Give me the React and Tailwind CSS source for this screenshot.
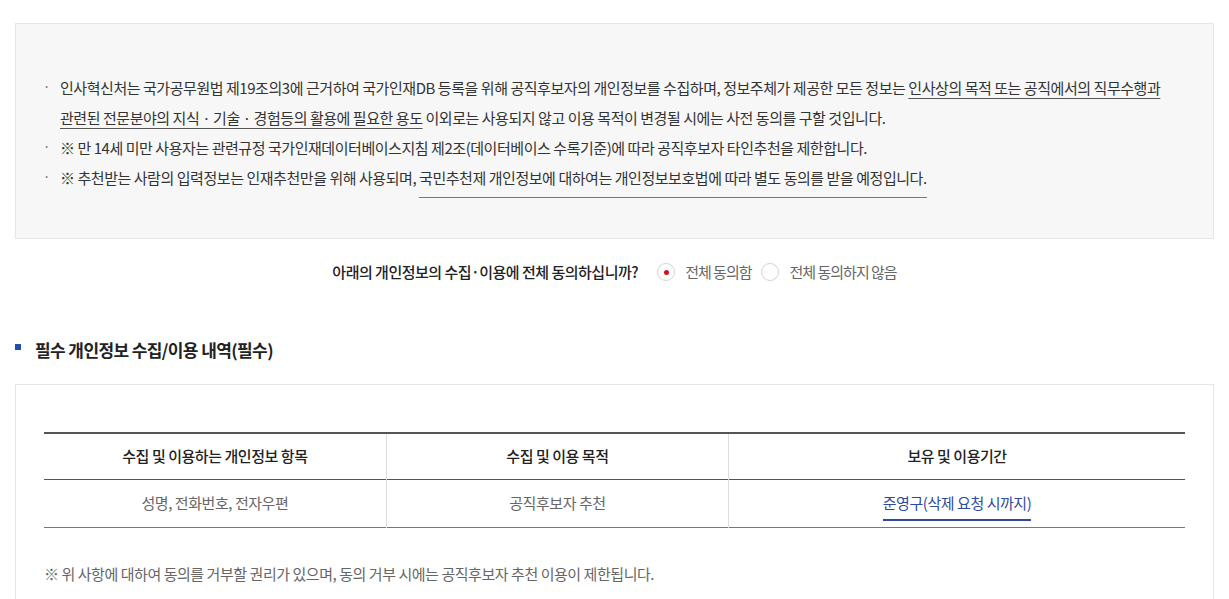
import React from 'react';

const font = { fontFamily: '"Noto Sans CJK KR", "Noto Sans", sans-serif' };

const Bullet = ({ children }) => (
  <li className="relative pl-[44px] before:absolute before:left-[27px] before:top-[-1px] before:content-['·'] before:text-[#555] before:text-[13px]">
    {children}
  </li>
);

const App = () => {
  return (
    <div className="bg-white min-h-screen px-[15px] pt-[23px] text-[#333]" style={font}>
      <div className="bg-[#f7f7f7] border border-[#e6e6e6] pt-[49px] pb-[40px] pr-[30px]">
        <ul className="text-[15px] leading-[30px] tracking-[-0.45px] break-keep">
          <Bullet>
            인사혁신처는 국가공무원법 제19조의3에 근거하여 국가인재DB 등록을 위해 공직후보자의 개인정보를 수집하며, 정보주체가 제공한 모든 정보는{' '}
            <span className="underline underline-offset-[4px] decoration-[#555]">
              인사상의 목적 또는 공직에서의 직무수행과 관련된 전문분야의 지식 · 기술 · 경험등의 활용에 필요한 용도
            </span>{' '}
            이외로는 사용되지 않고 이용 목적이 변경될 시에는 사전 동의를 구할 것입니다.
          </Bullet>
          <Bullet>※ 만 14세 미만 사용자는 관련규정 국가인재데이터베이스지침 제2조(데이터베이스 수록기준)에 따라 공직후보자 타인추천을 제한합니다.</Bullet>
          <Bullet>
            ※ 추천받는 사람의 입력정보는 인재추천만을 위해 사용되며,{' '}
            <span className="inline-block leading-[26px] border-b border-[#777] pb-[6px]">
              국민추천제 개인정보에 대하여는 개인정보보호법에 따라 별도 동의를 받을 예정입니다.
            </span>
          </Bullet>
        </ul>
      </div>

      <div className="flex items-center justify-center h-[66px] text-[15px] tracking-[-0.5px]">
        <span className="font-medium text-[#222]">아래의 개인정보의 수집·이용에 전체 동의하십니까?</span>
        <label className="flex items-center ml-[19px] text-[#666] tracking-[-1px]">
          <span className="w-[18px] h-[18px] rounded-full border border-[#d5d5d5] bg-white flex items-center justify-center">
            <span className="w-[5px] h-[5px] rounded-full bg-[#d0121b]" />
          </span>
          <span className="ml-[10px]">전체 동의함</span>
        </label>
        <label className="flex items-center ml-[9px] text-[#666] tracking-[-1px]">
          <span className="w-[18px] h-[18px] rounded-full border border-[#d5d5d5] bg-white" />
          <span className="ml-[11px]">전체 동의하지 않음</span>
        </label>
      </div>

      <h3 className="flex items-center mt-[32px] text-[17px] font-bold text-[#222] tracking-[-0.6px]">
        <span className="w-[6px] h-[6px] bg-[#1f4fb4] mr-[14px] mb-[6px]" />
        필수 개인정보 수집/이용 내역(필수)
      </h3>

      <div className="mt-[21px] border border-[#e6e6e6] px-[28px] pt-[47px] pb-[30px]">
        <table className="w-full border-collapse text-[15px] tracking-[-0.45px] text-center">
          <colgroup>
            <col className="w-[30%]" />
            <col className="w-[30%]" />
            <col className="w-[40%]" />
          </colgroup>
          <thead>
            <tr className="border-t-2 border-b border-t-[#555] border-b-[#555] h-[47px]">
              <th className="font-medium text-[#222] border-r border-[#ddd]">수집 및 이용하는 개인정보 항목</th>
              <th className="font-medium text-[#222] border-r border-[#ddd]">수집 및 이용 목적</th>
              <th className="font-medium text-[#222]">보유 및 이용기간</th>
            </tr>
          </thead>
          <tbody>
            <tr className="border-b border-[#777] h-[48px] text-[#666]">
              <td className="border-r border-[#ddd]">성명, 전화번호, 전자우편</td>
              <td className="border-r border-[#ddd]">공직후보자 추천</td>
              <td>
                <span className="inline-block text-[#2f4a9c] border-b-2 border-[#2f4a9c] leading-[22px] pb-[5px] mt-[6px]">
                  준영구(삭제 요청 시까지)
                </span>
              </td>
            </tr>
          </tbody>
        </table>
        <p className="mt-[35px] text-[15px] text-[#666] tracking-[-0.45px]">
          ※ 위 사항에 대하여 동의를 거부할 권리가 있으며, 동의 거부 시에는 공직후보자 추천 이용이 제한됩니다.
        </p>
      </div>
    </div>
  );
};

export default App;
